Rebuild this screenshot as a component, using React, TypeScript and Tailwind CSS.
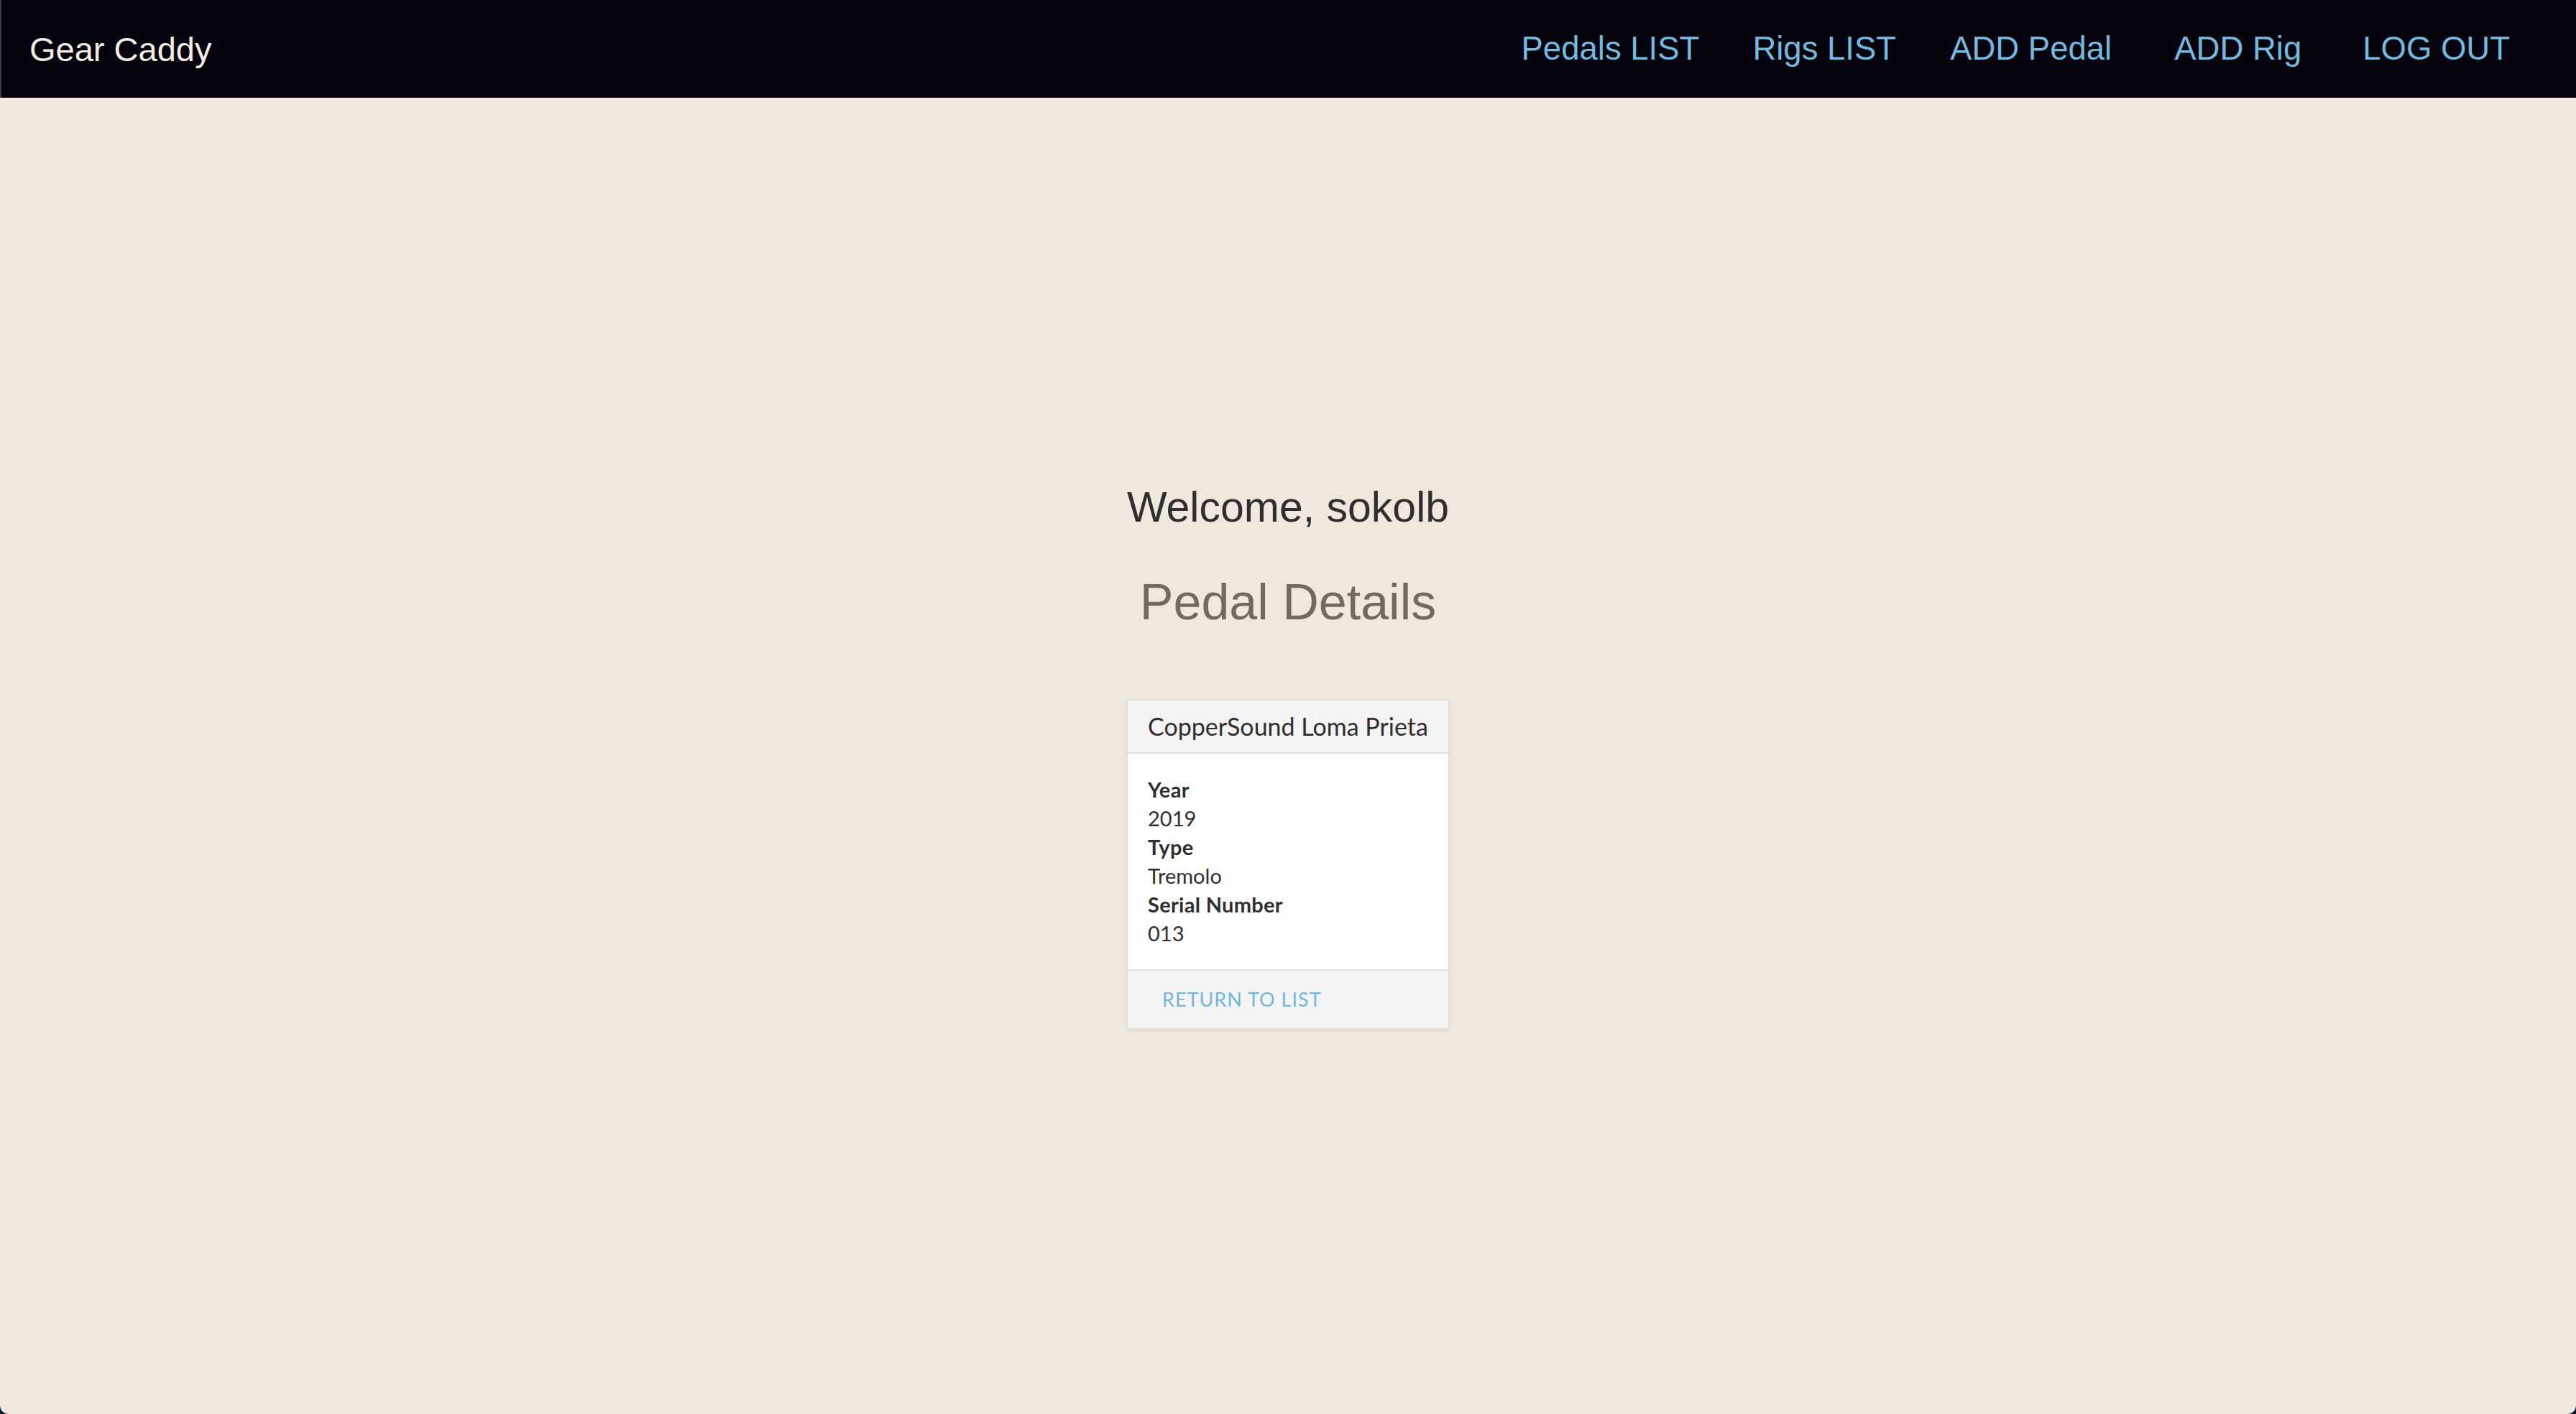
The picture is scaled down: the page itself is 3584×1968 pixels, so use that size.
const links = [
  { label: "Pedals LIST", gap: "ml-0" },
  { label: "Rigs LIST", gap: "ml-[74px]" },
  { label: "ADD Pedal", gap: "ml-[75px]" },
  { label: "ADD Rig", gap: "ml-[87px]" },
  { label: "LOG OUT", gap: "ml-[85px]" },
];

const details = [
  { label: "Year", value: "2019" },
  { label: "Type", value: "Tremolo" },
  { label: "Serial Number", value: "013" },
];

function NavBar() {
  return (
    <nav className="h-[136px] shrink-0 bg-[#05030d] flex items-center border-l-2 border-[#3a3a3f] pl-[39px] pr-[92px] font-['Liberation_Sans',Arial,sans-serif]">
      <a className="text-[47px] text-[#f3ece0] leading-none">Gear Caddy</a>
      <div className="ml-auto flex items-center">
        {links.map((link) => (
          <a
            key={link.label}
            className={`${link.gap} text-[45.5px] text-[#74b9de] leading-none`}
          >
            {link.label}
          </a>
        ))}
      </div>
    </nav>
  );
}

function PedalCard() {
  return (
    <div className="w-fit bg-white border-2 border-[#e1dfdc] rounded-[6px] overflow-hidden shadow-[0_2px_4px_rgba(0,0,0,0.06)] font-['Lato','Liberation_Sans',sans-serif] text-[#2f2f2f]">
      <div className="h-[74px] flex items-center px-[28px] bg-[#f4f4f4] border-b-2 border-[#e1e1e1]">
        <h3 className="text-[34px] leading-none">CopperSound Loma Prieta</h3>
      </div>
      <div className="px-[28px] py-[30px] text-[29px] leading-[40px]">
        {details.map((d) => (
          <div key={d.label}>
            <div className="font-bold tracking-[0.3px]">{d.label}</div>
            <div>{d.value}</div>
          </div>
        ))}
      </div>
      <div className="h-[82px] flex items-center px-[48px] bg-[#f4f4f4] border-t-2 border-[#e1e1e1]">
        <a className="text-[27px] leading-none text-[#72b6dd] tracking-[1px]">
          RETURN TO LIST
        </a>
      </div>
    </div>
  );
}

export default function App() {
  return (
    <div className="min-h-screen bg-[#0c1a2c]">
      <div className="min-h-screen flex flex-col bg-[#f0e8dc] rounded-b-[12px] overflow-hidden">
        <NavBar />
        <main className="flex-1 flex flex-col items-center justify-center pb-[2px]">
          <h1 className="text-[59px] leading-[72px] text-[#2f2f2f] font-['Liberation_Sans',Arial,sans-serif]">
            Welcome, sokolb
          </h1>
          <h2 className="mt-[54px] text-[70px] leading-[84px] text-[#716a5f] font-['Liberation_Sans',Arial,sans-serif]">
            Pedal Details
          </h2>
          <div className="mt-[93px]">
            <PedalCard />
          </div>
        </main>
      </div>
    </div>
  );
}
